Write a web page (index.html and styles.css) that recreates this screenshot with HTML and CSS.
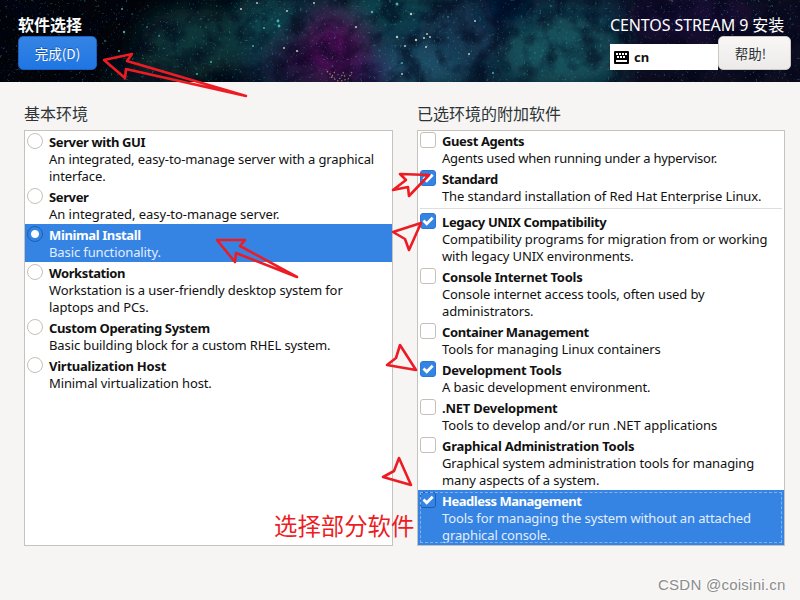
FILE: index.html
```html
<!DOCTYPE html>
<html lang="zh-CN">
<head>
<meta charset="utf-8">
<title>软件选择</title>
<link rel="stylesheet" href="styles.css">
</head>
<body>
<header class="top">
  <svg class="nebula" width="800" height="82" viewBox="0 0 800 82" aria-hidden="true">
    <defs>
      <filter id="soft" x="-50%" y="-50%" width="200%" height="200%"><feGaussianBlur stdDeviation="12"/></filter>
      <filter id="cloud" x="0" y="0" width="100%" height="100%" color-interpolation-filters="sRGB">
        <feTurbulence type="fractalNoise" baseFrequency="0.045" numOctaves="5" seed="8"/>
        <feColorMatrix values="0 0 0 0 0  0 0 0 0 0.01  0 0 0 0 0.09  3 0 0 0 -1.2"/>
      </filter>
      <filter id="dust" x="0" y="0" width="100%" height="100%" color-interpolation-filters="sRGB">
        <feTurbulence type="fractalNoise" baseFrequency="0.38" numOctaves="2" seed="21"/>
        <feColorMatrix values="0 0 0 0 0.25  0 0 0 0 0.68  0 0 0 0 0.68  7 0 0 0 -4.6"/>
      </filter>
    </defs>
    <rect width="800" height="82" fill="#020409"/>
    <g filter="url(#soft)">
      <rect x="240" y="-10" width="390" height="102" fill="#0d2b40"/>
      <rect x="620" y="-10" width="200" height="102" fill="#0a0a20"/>
      <ellipse cx="195" cy="42" rx="55" ry="34" fill="#0a3439"/>
      <ellipse cx="155" cy="75" rx="50" ry="14" fill="#072226"/>
      <ellipse cx="265" cy="20" rx="30" ry="28" fill="#0f3f48"/>
      <ellipse cx="390" cy="5" rx="50" ry="20" fill="#0f4450"/>
      <ellipse cx="415" cy="68" rx="48" ry="24" fill="#1d5068"/>
      <ellipse cx="470" cy="30" rx="50" ry="30" fill="#17354f"/>
      <ellipse cx="335" cy="50" rx="32" ry="38" fill="#440e50"/>
      <ellipse cx="290" cy="62" rx="18" ry="26" fill="#200e3a"/>
      <ellipse cx="374" cy="74" rx="18" ry="12" fill="#2d085c"/>
      <ellipse cx="507" cy="12" rx="28" ry="18" fill="#020830"/>
      <ellipse cx="560" cy="52" rx="56" ry="36" fill="#12515c"/>
      <ellipse cx="690" cy="15" rx="65" ry="30" fill="#140a30"/>
    </g>
    <rect width="800" height="82" filter="url(#cloud)" opacity=".55"/>
    <rect width="800" height="82" filter="url(#dust)" opacity=".35"/>
    <g fill="#57cfca" opacity=".8">
      <circle cx="122" cy="9" r="1"/><circle cx="124" cy="32" r="1.2"/><circle cx="105" cy="41" r=".8"/><circle cx="119" cy="51" r="1"/><circle cx="147" cy="27" r=".8"/><circle cx="159" cy="36" r=".8"/><circle cx="197" cy="74" r="1"/><circle cx="211" cy="62" r="1"/><circle cx="278" cy="21" r="1.4"/><circle cx="279" cy="26" r="1.4"/><circle cx="264" cy="28" r="1"/><circle cx="372" cy="12" r="1.2"/><circle cx="397" cy="4" r="1.5"/><circle cx="253" cy="46" r="1"/><circle cx="448" cy="17" r=".8"/><circle cx="493" cy="73" r="1"/><circle cx="402" cy="63" r="1"/>
    </g>
    <g fill="#e2dfca" opacity=".85">
      <circle cx="241" cy="9" r="1.1"/><circle cx="314" cy="3" r="1"/><circle cx="287" cy="11" r="1"/><circle cx="284" cy="48" r="1"/><circle cx="297" cy="51" r="1.1"/><circle cx="356" cy="27" r="1"/><circle cx="411" cy="14" r="1.2"/><circle cx="397" cy="37" r="1.2"/><circle cx="405" cy="46" r="1"/><circle cx="416" cy="40" r="1.2"/><circle cx="424" cy="38" r="1.1"/><circle cx="427" cy="34" r="1"/><circle cx="430" cy="37" r="1"/><circle cx="426" cy="47" r="1"/><circle cx="475" cy="21" r="1"/><circle cx="469" cy="54" r="1"/><circle cx="402" cy="74" r="1"/><circle cx="257" cy="3" r="1"/>
    </g>
    <path d="M327 71l5 5 4-6M331 77l7 4 5-7M341 81l7-2 4-7M343 72l2 5" fill="none" stroke="#c19085" stroke-width="1.2" stroke-dasharray="1.5 2" opacity=".8"/>
  </svg>
  <div class="lead">
    <h1>软件选择</h1>
    <button class="btn done">完成(D)</button>
  </div>
  <div class="tail">
    <div class="product">CENTOS STREAM 9 安装</div>
    <div class="tools">
      <div class="layout">
        <svg width="15" height="13" viewBox="0 0 15 13"><rect width="15" height="13" rx="1" fill="#000"/><path d="M2 3h2M5 3h2M8 3h2M11 3h2M3 6h2M6 6h2M9 6h2" stroke="#fff" stroke-width="2"/><path d="M2 10h11" stroke="#fff" stroke-width="2"/></svg>
        <span>cn</span>
      </div>
      <button class="btn help">帮助!</button>
    </div>
  </div>
</header>
<main class="columns">
  <section>
    <h2>基本环境</h2>
    <div class="list base">
      <div class="row"><i class="radio"></i><div><b>Server with GUI</b><p>An integrated, easy-to-manage server with a graphical<br>interface.</p></div></div>
      <div class="row"><i class="radio"></i><div><b>Server</b><p class="loose">An integrated, easy-to-manage server.</p></div></div>
      <div class="row selected"><i class="radio on"></i><div><b>Minimal Install</b><p>Basic functionality.</p></div></div>
      <div class="row"><i class="radio"></i><div><b>Workstation</b><p>Workstation is a user-friendly desktop system for<br>laptops and PCs.</p></div></div>
      <div class="row"><i class="radio"></i><div><b>Custom Operating System</b><p>Basic building block for a custom RHEL system.</p></div></div>
      <div class="row"><i class="radio"></i><div><b class="loose">Virtualization Host</b><p>Minimal virtualization host.</p></div></div>
    </div>
  </section>
  <section>
    <h2>已选环境的附加软件</h2>
    <div class="list addons">
      <div class="row"><i class="check"></i><div><b>Guest Agents</b><p class="tight">Agents used when running under a hypervisor.</p></div></div>
      <div class="row"><i class="check on"><svg viewBox="0 0 16 16"><path d="M3.5 7.5l3.2 3.2 6-6"/></svg></i><div><b>Standard</b><p>The standard installation of Red Hat Enterprise Linux.</p></div></div>
      <hr>
      <div class="row"><i class="check on"><svg viewBox="0 0 16 16"><path d="M3.5 7.5l3.2 3.2 6-6"/></svg></i><div><b>Legacy UNIX Compatibility</b><p>Compatibility programs for migration from or working<br>with legacy UNIX environments.</p></div></div>
      <div class="row"><i class="check"></i><div><b class="loose">Console Internet Tools</b><p>Console internet access tools, often used by<br>administrators.</p></div></div>
      <div class="row"><i class="check"></i><div><b>Container Management</b><p>Tools for managing Linux containers</p></div></div>
      <div class="row"><i class="check on"><svg viewBox="0 0 16 16"><path d="M3.5 7.5l3.2 3.2 6-6"/></svg></i><div><b class="loose">Development Tools</b><p>A basic development environment.</p></div></div>
      <div class="row"><i class="check"></i><div><b class="loose">.NET Development</b><p class="loose">Tools to develop and/or run .NET applications</p></div></div>
      <div class="row"><i class="check"></i><div><b class="loose">Graphical Administration Tools</b><p>Graphical system administration tools for managing<br>many aspects of a system.</p></div></div>
      <div class="row selected focus"><i class="check on"><svg viewBox="0 0 16 16"><path d="M3.5 7.5l3.2 3.2 6-6"/></svg></i><div><b class="tight">Headless Management</b><p>Tools for managing the system without an attached<br>graphical console.</p></div></div>
    </div>
  </section>
</main>
<svg class="marks" width="800" height="600" viewBox="0 0 800 600" aria-hidden="true">
  <path d="M246 96L127 61l5-7-28 6 21 18 1-9z"/>
  <path d="M297 277l-57-31 5-6-28 0 18 22 1-9z"/>
  <path d="M429 175l-29-1 6 6-13 10 15-3 1 9z"/>
  <path d="M421 223l-28 9 12 7 4 11z"/>
  <path d="M400 345l-4 13-9 7 29 5z"/>
  <path d="M399 458l-5 13-11 6 28 8z"/>
</svg>
<div class="note">选择部分软件</div>
<div class="watermark">CSDN @coisini.cn</div>
</body>
</html>
```
FILE: styles.css
```css
* { box-sizing: border-box; }
body {
  margin: 0;
  width: 800px;
  height: 600px;
  overflow: hidden;
  position: relative;
  background: #f6f5f4;
  color: #111;
  font: 13px/17px "Noto Sans", "Noto Sans CJK SC", sans-serif;
}
h1, h2, p { margin: 0; }
.top {
  position: relative;
  height: 82px;
  padding: 14px 9px 0 18px;
  display: flex;
  justify-content: space-between;
  color: #fff;
}
.nebula { position: absolute; left: 0; top: 0; }
.lead, .tail { position: relative; }
h1 { height: 22px; font: bold 16px/20px "Noto Sans CJK SC", sans-serif; }
.btn {
  display: block;
  height: 34px;
  padding: 0;
  border-radius: 5px;
  font: 13.5px/30px "Noto Sans CJK SC", sans-serif;
}
.done {
  width: 79px;
  color: #fff;
  border: 1px solid #1b5fbf;
  background: linear-gradient(#3584e4, #1f76e3);
  text-shadow: 0 -1px #1a59ad;
}
.tail { width: 181px; }
.product { height: 22px; font: 16px/22px "Noto Sans", "Noto Sans CJK SC", sans-serif; white-space: nowrap; letter-spacing: -.1px; }
.tools { display: flex; align-items: flex-end; }
.layout {
  width: 108px;
  height: 26px;
  padding-left: 4px;
  display: flex;
  align-items: center;
  gap: 5px;
  background: #fff;
  color: #111;
  font-weight: bold;
}
.help {
  width: 73px;
  padding-right: 8px;
  color: #2e3436;
  border: 1px solid #cdc7c2;
  background: linear-gradient(#f8f7f6, #edebe9);
}
.columns {
  display: grid;
  grid-template-columns: 369px 368px;
  gap: 24px;
  padding: 21px 15px 0 24px;
}
h2 { height: 27px; font: 16px/20px "Noto Sans CJK SC", sans-serif; color: #2e3436; }
.list { height: 416px; border: 1px solid #c6c2bd; background: #fff; }
.addons > .row:first-child { margin-top: -1px; }
.row { display: flex; padding: 2px 0 2px 2px; white-space: nowrap; }
.row b { display: block; letter-spacing: -.38px; }
.row b.loose { letter-spacing: -.24px; }
.row b.tight { letter-spacing: -.48px; }
.row p { letter-spacing: -.11px; }
.row p.loose { letter-spacing: -.04px; }
.row p.tight { letter-spacing: -.23px; }
.row > div { margin-left: 6px; padding-top: 1px; margin-bottom: -1px; }
.radio, .check {
  width: 16px;
  height: 16px;
  flex: none;
  border: 1px solid #c6bfb8;
  background: #fff;
}
.radio { border-radius: 50%; }
.check { border-radius: 3px; }
.check.on { border-color: #2b77d6; background: #3584e4; }
.check svg { display: block; width: 16px; height: 16px; margin: -1px; fill: none; stroke: #fff; stroke-width: 2.8; }
.radio.on { border-color: #185fb4; background: radial-gradient(circle, #fff 3.5px, #3584e4 4.5px); }
.selected { background: #3584e4; color: #fff; }
.selected p { color: #e3edfb; }
.focus { outline: 1px dashed #82b2ed; outline-offset: -3px; }
.focus .check.on { border-color: #185fb4; }
hr { width: 362px; height: 1px; margin: 2px 0 2px 2px; border: 0; background: #dedede; }
.marks { position: absolute; inset: 0; fill: none; stroke: #ed1c24; stroke-width: 2.6; stroke-linejoin: round; }
.note { position: absolute; left: 274px; top: 509px; font: 23.4px/32px "Noto Sans CJK SC", sans-serif; color: #ed1c24; white-space: nowrap; }
.watermark { position: absolute; left: 658px; top: 575px; font: 15px/20px "Liberation Sans", sans-serif; letter-spacing: .25px; color: #8c8c8c; white-space: nowrap; text-shadow: -1px -1px #fff; }
```
